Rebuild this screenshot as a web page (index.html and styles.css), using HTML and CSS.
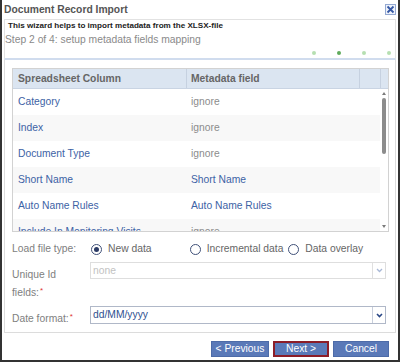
FILE: index.html
```html
<!DOCTYPE html>
<html lang="en">
<head>
  <meta charset="UTF-8">
  <title>Document Record Import</title>
  <link rel="stylesheet" href="styles.css">
</head>
<body>

  <div class="dialog">
    <div class="titlebar">
      <span class="title">Document Record Import</span>
      <button class="close" title="Close">
        <svg width="9" height="9" viewBox="0 0 9 9"><path d="M1.5 1.5 L7.5 7.5 M7.5 1.5 L1.5 7.5" stroke="#3457a4" stroke-width="1.8" fill="none"/></svg>
      </button>
    </div>

    <div class="wizard">
      <div class="wizard-intro">This wizard helps to import metadata from the XLSX-file</div>
      <div class="wizard-step">Step 2 of 4: setup metadata fields mapping</div>
      <div class="steps">
        <span class="dot"></span>
        <span class="dot active"></span>
        <span class="dot"></span>
        <span class="dot"></span>
      </div>
    </div>

    <div class="panel">
      <div class="grid">
        <div class="grid-head">
          <div class="head-cell col1">Spreadsheet Column</div>
          <div class="head-cell col2">Metadata field</div>
          <div class="head-cell col3"></div>
          <div class="head-corner"></div>
        </div>
        <div class="grid-body">
          <div class="rows">
            <div class="row"><div class="cell col1 link">Category</div><div class="cell col2 muted">ignore</div></div>
            <div class="row"><div class="cell col1 link">Index</div><div class="cell col2 muted">ignore</div></div>
            <div class="row"><div class="cell col1 link">Document Type</div><div class="cell col2 muted">ignore</div></div>
            <div class="row"><div class="cell col1 link">Short Name</div><div class="cell col2 link">Short Name</div></div>
            <div class="row"><div class="cell col1 link">Auto Name Rules</div><div class="cell col2 link">Auto Name Rules</div></div>
            <div class="row"><div class="cell col1 link">Include In Monitoring Visits</div><div class="cell col2 muted">ignore</div></div>
          </div>
          <div class="scrollbar">
            <span class="arrow-up"></span>
            <span class="thumb"></span>
            <span class="track"></span>
            <span class="arrow-down"></span>
          </div>
        </div>
      </div>

      <div class="form">
        <div class="label">Load file type:</div>
        <div class="radios">
          <label class="radio-opt"><span class="radio checked"></span>New data</label>
          <label class="radio-opt"><span class="radio"></span>Incremental data</label>
          <label class="radio-opt"><span class="radio"></span>Data overlay</label>
        </div>

        <div class="label label-unique">Unique Id<br>fields:<span class="req">*</span></div>
        <div class="select disabled">
          <div class="select-value">none</div>
          <div class="select-btn">
            <svg width="7" height="5" viewBox="0 0 7 5"><path d="M1 1 L3.5 3.5 L6 1" stroke="#a8b8d6" stroke-width="1.3" fill="none"/></svg>
          </div>
        </div>

        <div class="label label-date">Date format:<span class="req">*</span></div>
        <div class="select date">
          <div class="select-value">dd/MM/yyyy</div>
          <div class="select-btn">
            <svg width="7" height="5" viewBox="0 0 7 5"><path d="M1 1 L3.5 3.5 L6 1" stroke="#2a4786" stroke-width="1.6" fill="none"/></svg>
          </div>
        </div>
      </div>
    </div>

    <div class="buttons">
      <button class="btn btn-prev">&lt; Previous</button>
      <button class="btn btn-next">Next &gt;</button>
      <button class="btn btn-cancel">Cancel</button>
    </div>
  </div>

</body>
</html>
```

FILE: styles.css
```css
body {
  margin: 0;
  font-family: "Liberation Sans", Arial, sans-serif;
  font-size: 10.3px;
  background: #fff;
}

.dialog {
  width: 400px;
  height: 362px;
  box-sizing: border-box;
  border: 2px solid #333;
  border-top: 0;
  padding: 0 2px;
  display: flex;
  flex-direction: column;
  background: #fff;
}

/* title row */
.titlebar {
  height: 19px;
  flex: none;
  display: flex;
  align-items: center;
  justify-content: space-between;
}

.title {
  font-weight: bold;
  color: #555;
}

.close {
  width: 11px;
  height: 11px;
  box-sizing: border-box;
  padding: 0;
  border: 1px solid #94a9d2;
  background: #eef2fa;
  display: flex;
  align-items: center;
  justify-content: center;
  margin-top: -1px;
}

/* wizard header */
.wizard {
  height: 41px;
  flex: none;
  box-sizing: border-box;
  border: 1px solid #e2e2e2;
  border-bottom: 2px solid #d0dcee;
}

.wizard-intro {
  font-size: 8.1px;
  font-weight: bold;
  color: #222;
  line-height: 10px;
  padding: 1px 0 0 3px;
}

.wizard-step {
  color: #8a8a8a;
  line-height: 15px;
  margin-top: 1px;
}

.steps {
  display: flex;
  justify-content: flex-end;
  gap: 21px;
  padding-right: 4px;
  margin-top: 4px;
}

.dot {
  width: 4px;
  height: 4px;
  border-radius: 50%;
  background: #b6dfb1;
}

.dot.active {
  background: #5fab5c;
}

/* main panel */
.panel {
  height: 273px;
  flex: none;
  box-sizing: border-box;
  border: 1px solid #dcdcdc;
  border-top: 0;
  padding: 8px 6px 0 7px;
}

.grid {
  border: 1px solid #d2d2d2;
}

.grid-head {
  display: flex;
  height: 19px;
  background: #dbe5f1;
  border-bottom: 1px solid #c9d4e3;
}

.head-cell {
  box-sizing: border-box;
  border-right: 1px solid #c6d1e0;
  padding-left: 5px;
  font-weight: bold;
  color: #666;
  line-height: 19px;
}

.head-cell.col1 { width: 174px; }
.head-cell.col2 { width: 173px; padding-left: 4px; }
.head-cell.col3 { width: 21px; }

.head-corner {
  flex: 1;
}

.grid-body {
  display: flex;
  height: 142px;
  overflow: hidden;
}

.rows {
  width: 367px;
}

.row {
  display: flex;
  height: 26px;
  line-height: 26px;
}

.row:nth-child(even) {
  background: #f8f8f8;
}

.cell {
  box-sizing: border-box;
  white-space: nowrap;
  overflow: hidden;
}

.cell.col1 { width: 174px; padding-left: 5px; }
.cell.col2 { width: 173px; padding-left: 4px; }

.link { color: #3d62a5; }
.muted { color: #8c8c8c; }

.scrollbar {
  width: 8px;
  display: flex;
  flex-direction: column;
  align-items: center;
}

.arrow-up {
  margin-top: 3px;
  border-left: 2.5px solid transparent;
  border-right: 2.5px solid transparent;
  border-bottom: 3px solid #7a7a7a;
}

.thumb {
  margin-top: 3px;
  width: 4px;
  height: 56px;
  border-radius: 2px;
  background: #8c8c8c;
}

.track {
  flex: 1;
}

.arrow-down {
  margin-bottom: 3px;
  border-left: 2.5px solid transparent;
  border-right: 2.5px solid transparent;
  border-top: 3px solid #7a7a7a;
}

/* form fields */
.form {
  display: grid;
  grid-template-columns: 78px 296px;
  row-gap: 5px;
  margin-top: 9px;
}

.label {
  color: #808080;
  line-height: 16px;
  white-space: nowrap;
}

.label-unique { padding-top: 5px; }
.label-date { padding-top: 3px; }

.req {
  color: #e03535;
  font-size: 8px;
  vertical-align: 3px;
  margin-left: 1px;
}

.radios {
  display: flex;
}

.radio-opt {
  width: 99px;
  display: flex;
  align-items: center;
  gap: 6px;
  padding-left: 1px;
  box-sizing: border-box;
  color: #666;
  line-height: 16px;
  white-space: nowrap;
}

.radio {
  width: 11px;
  height: 11px;
  flex: none;
  box-sizing: border-box;
  border: 1.5px solid #3f5078;
  border-radius: 50%;
  display: flex;
  align-items: center;
  justify-content: center;
}

.radio.checked::after {
  content: "";
  width: 5px;
  height: 5px;
  border-radius: 50%;
  background: #2c3b66;
}

.select {
  display: flex;
  height: 17px;
  box-sizing: border-box;
  border: 1px solid #dedede;
}

.select-value {
  flex: 1;
  padding-left: 2px;
  line-height: 15px;
}

.select-btn {
  width: 13px;
  box-sizing: border-box;
  border-left: 1px solid #e0e0e0;
  display: flex;
  align-items: center;
  justify-content: center;
}

.select.disabled .select-value {
  color: #c2c2c2;
}

.select.date {
  height: 18px;
  border-color: #b0b8c8;
}

.select.date .select-value {
  color: #2f4f8f;
  line-height: 16px;
}

.select.date .select-btn {
  border-left-color: #c8cfdc;
}

/* bottom buttons */
.buttons {
  display: flex;
  justify-content: flex-end;
  gap: 4px;
  padding-top: 8px;
  padding-right: 7px;
}

.btn {
  height: 16px;
  box-sizing: border-box;
  padding: 0;
  border: 1px solid #4d6ba8;
  background: #5a79b8;
  color: #fff;
  font-family: "Liberation Sans", Arial, sans-serif;
  font-size: 10.3px;
  line-height: 14px;
}

.btn-prev { width: 58px; }
.btn-next { width: 56px; border: 2px solid #8c1d28; line-height: 12px; }
.btn-cancel { width: 56px; }
```
